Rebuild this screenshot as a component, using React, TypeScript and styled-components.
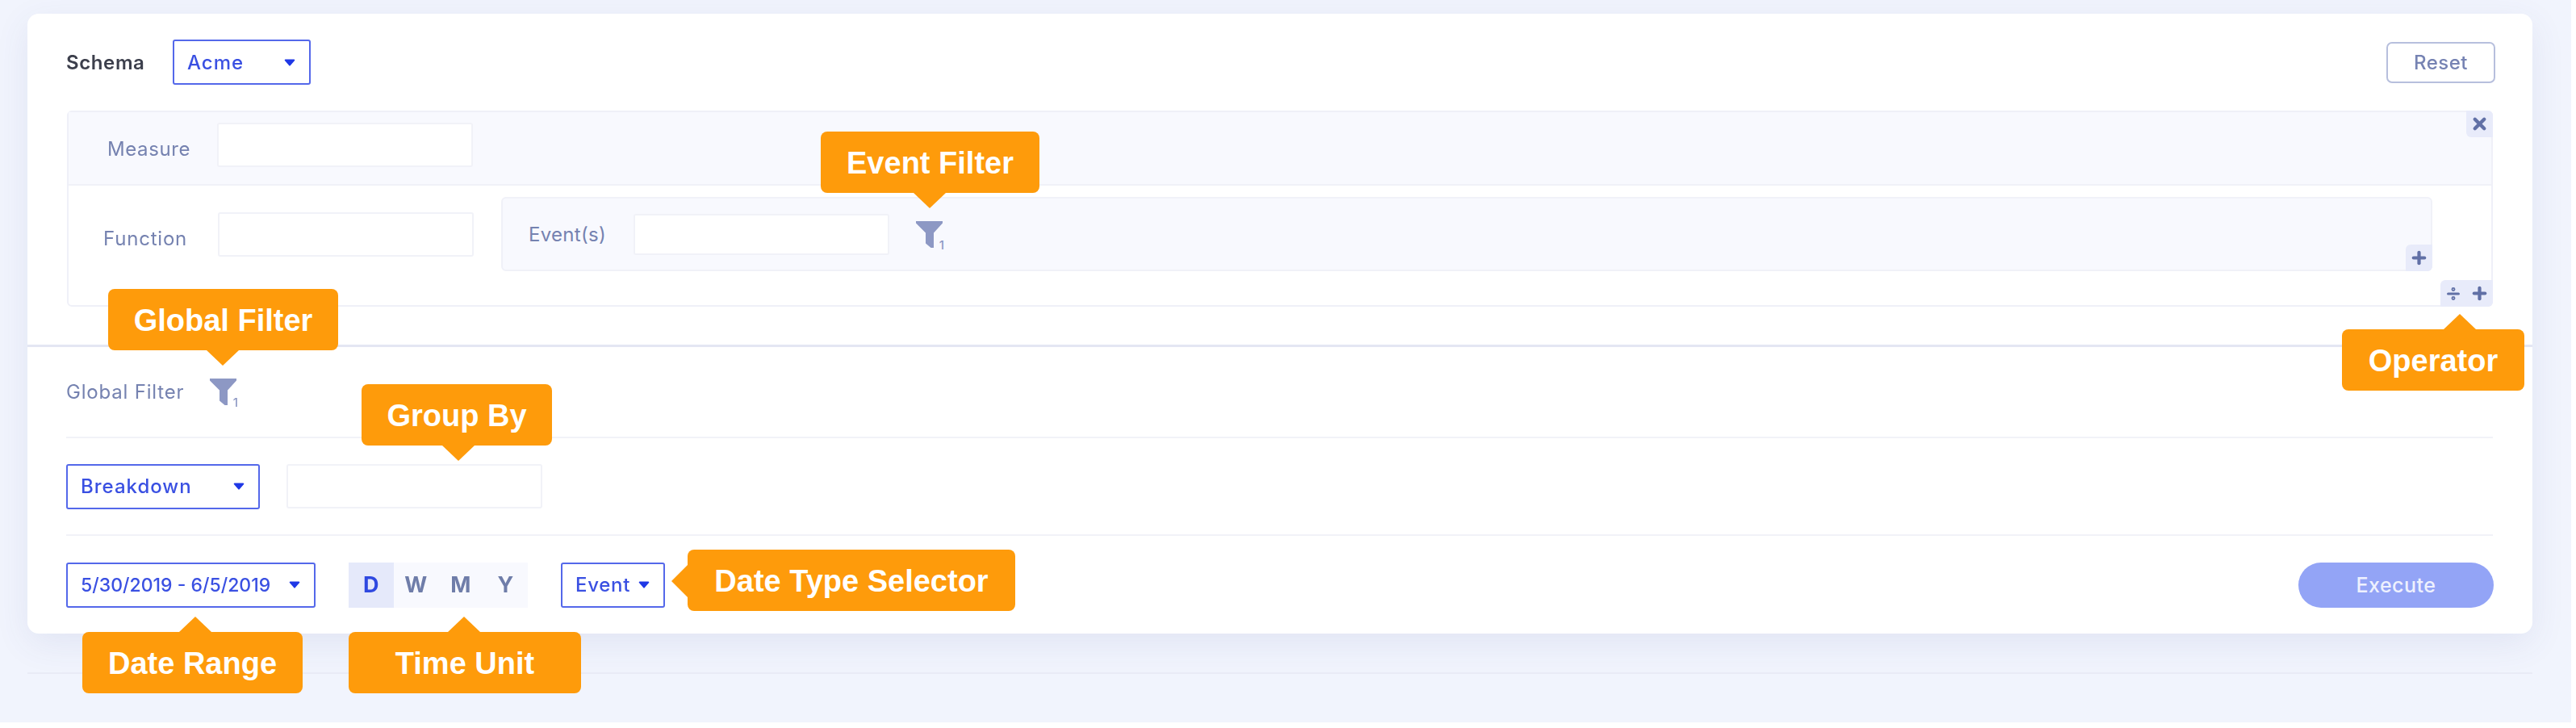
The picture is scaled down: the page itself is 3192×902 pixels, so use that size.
import React from 'react';
import styled, { createGlobalStyle, css } from 'styled-components';
import { Divide, Plus, X } from 'lucide-react';

const GlobalStyle = createGlobalStyle`
  body {
    margin: 0;
    background: #fff;
    font-family: Inter, "Open Sans", sans-serif;
  }
`;

type TipSide = 'up' | 'down' | 'left';

interface CalloutProps {
  $left: number;
  $top: number;
  $width: number;
  $tip: TipSide;
  $tipAt: number;
}

const Callout = styled.div<CalloutProps>`
  position: absolute;
  z-index: 2;
  box-sizing: border-box;
  left: ${p => p.$left}px;
  top: ${p => p.$top}px;
  width: ${p => p.$width}px;
  height: 76px;
  padding-top: 3px;
  display: flex;
  align-items: center;
  justify-content: center;
  border-radius: 8px;
  background: #fe9b0b;
  color: #fff;
  font-family: "Liberation Sans", Arial, sans-serif;
  font-size: 38px;
  font-weight: 700;
  white-space: nowrap;

  &::after {
    content: '';
    position: absolute;
    width: 0;
    height: 0;
    ${p =>
      p.$tip === 'down' &&
      css`
        top: 100%;
        left: ${p.$tipAt - 20}px;
        border-left: 20px solid transparent;
        border-right: 20px solid transparent;
        border-top: 19px solid #fe9b0b;
      `}
    ${p =>
      p.$tip === 'up' &&
      css`
        bottom: 100%;
        left: ${p.$tipAt - 20}px;
        border-left: 20px solid transparent;
        border-right: 20px solid transparent;
        border-bottom: 19px solid #fe9b0b;
      `}
    ${p =>
      p.$tip === 'left' &&
      css`
        right: 100%;
        top: ${p.$tipAt - 20}px;
        border-top: 20px solid transparent;
        border-bottom: 20px solid transparent;
        border-right: 20px solid #fe9b0b;
      `}
  }
`;

const Page = styled.div`
  box-sizing: border-box;
  width: 3186px;
  height: 895px;
  padding: 17px 48px 0 34px;
  background: #f1f4fd;
  filter: blur(0.6px);
`;

const Card = styled.div`
  position: relative;
  height: 768px;
  display: flex;
  flex-direction: column;
  border-radius: 14px;
  background: #fff;
  box-shadow: 0 12px 44px rgba(70, 80, 140, 0.09);
`;

const PageRule = styled.div`
  height: 2px;
  margin-top: 48px;
  background: #e9ebf6;
`;

const Head = styled.div`
  display: flex;
  align-items: center;
  justify-content: space-between;
  padding: 32px 46px 32px 48px;
`;

const SchemaGroup = styled.div`
  display: flex;
  align-items: center;
`;

const SchemaLabel = styled.span`
  width: 132px;
  font-size: 24px;
  font-weight: 600;
  letter-spacing: 0.6px;
  color: #3c3f4c;
`;

const Select = styled.div<{ $width: number; $spacing?: number }>`
  box-sizing: border-box;
  width: ${p => p.$width}px;
  height: 56px;
  display: flex;
  align-items: center;
  justify-content: space-between;
  padding: 0 17px 0 16px;
  border: 2px solid #5468ea;
  border-radius: 3px;
  color: #3a50e2;
  font-size: ${p => (p.$spacing ? 24 : 23)}px;
  font-weight: 500;
  letter-spacing: ${p => p.$spacing ?? 0}px;
  white-space: nowrap;
`;

const ResetButton = styled.button`
  width: 135px;
  height: 51px;
  padding: 0;
  border: 2px solid #b7bfdd;
  border-radius: 7px;
  background: #fff;
  color: #7683b3;
  font-family: inherit;
  font-size: 24px;
  font-weight: 500;
  letter-spacing: 0.5px;
`;

const MetricBox = styled.div`
  position: relative;
  box-sizing: border-box;
  height: 243px;
  margin: 0 49px 47px;
  border: 2px solid #eff0f8;
  border-radius: 6px;
`;

const MeasureRow = styled.div`
  box-sizing: border-box;
  height: 91px;
  display: flex;
  align-items: center;
  padding: 0 0 8px 48px;
  background: #f8f9fe;
  border-bottom: 2px solid #f0f1f8;
`;

const FieldLabel = styled.span<{ $width: number; $shift?: number; $spacing?: number }>`
  width: ${p => p.$width}px;
  flex: none;
  padding-top: ${p => p.$shift ?? 0}px;
  font-size: 24px;
  letter-spacing: ${p => p.$spacing ?? 0.6}px;
  color: #7582b0;
`;

const TextInput = styled.div<{ $height?: number; $gap?: number }>`
  box-sizing: border-box;
  width: 317px;
  height: ${p => p.$height ?? 55}px;
  margin-left: ${p => p.$gap ?? 0}px;
  flex: none;
  border: 2px solid #f1f2f8;
  border-radius: 3px;
  background: #fff;
`;

const FunctionRow = styled.div`
  display: flex;
  align-items: center;
  height: 92px;
  margin-top: 14px;
  padding-left: 43px;
`;

const EventPanel = styled.div`
  position: relative;
  box-sizing: border-box;
  width: 2393px;
  height: 92px;
  margin-left: 34px;
  display: flex;
  align-items: center;
  padding-left: 32px;
  background: #f8f9fe;
  border: 2px solid #f0f1f8;
  border-radius: 6px;
`;

const FilterIcon = styled.span<{ $gap: number }>`
  position: relative;
  display: block;
  width: 33px;
  height: 33px;
  margin-left: ${p => p.$gap}px;
  color: #8d98c4;

  svg {
    display: block;
  }
`;

const FilterCount = styled.span`
  position: absolute;
  right: -2px;
  bottom: -4px;
  font-size: 15px;
  font-weight: 500;
  line-height: 15px;
  color: #8d98c4;
`;

const Badge = styled.div<{ $width: number; $corner: 'tl' | 'bl' }>`
  position: absolute;
  right: -2px;
  ${p => (p.$corner === 'bl' ? 'top: -2px;' : 'bottom: -2px;')}
  width: ${p => p.$width}px;
  height: 33px;
  display: flex;
  align-items: center;
  justify-content: space-around;
  background: #e8ebfa;
  color: #6170a6;
  border-radius: ${p => (p.$corner === 'bl' ? '0 6px 0 6px' : '6px 0 6px 0')};
`;

const Section = styled.div`
  border-top: 3px solid #e4e6f3;
`;

const Row = styled.div<{ $height: number; $last?: boolean }>`
  box-sizing: border-box;
  height: ${p => p.$height}px;
  margin: 0 49px 0 48px;
  display: flex;
  align-items: center;
  border-bottom: ${p => (p.$last ? 'none' : '2px solid #f1f2f8')};
`;

const UnitTabs = styled.div`
  display: flex;
  margin: 0 41px;
  background: #f8f9fe;
`;

const UnitTab = styled.div<{ $active?: boolean }>`
  width: 55.5px;
  height: 56px;
  display: flex;
  align-items: center;
  justify-content: center;
  font-size: 27px;
  font-weight: 700;
  color: ${p => (p.$active ? '#2f49e0' : '#6f7da9')};
  background: ${p => (p.$active ? '#e5e9fa' : 'transparent')};
`;

const ExecuteButton = styled.button`
  width: 242px;
  height: 56px;
  margin: 0 -1px 0 auto;
  padding: 0;
  border: none;
  border-radius: 28px;
  background: #93a4f6;
  color: #eef1fe;
  font-family: inherit;
  font-size: 25px;
  font-weight: 500;
  letter-spacing: 0.5px;
`;

const Caret = () => (
  <svg width="14" height="9" viewBox="0 0 15 10">
    <path d="M1.5 0.5h12a1 1 0 0 1 .8 1.6l-6 7a1 1 0 0 1-1.6 0l-6-7a1 1 0 0 1 .8-1.6z" fill="#1f38e6" />
  </svg>
);

const Funnel = ({ gap }: { gap: number }) => (
  <FilterIcon $gap={gap}>
    <svg width="33" height="33" viewBox="0 0 33 33">
      <path d="M0 0h33v2.5L22 14.5V33h-3.5L12 27.5v-13L0 2.5z" fill="currentColor" />
    </svg>
    <FilterCount>1</FilterCount>
  </FilterIcon>
);

const App = () => (
  <>
    <GlobalStyle />
    <Page>
      <Card>
        <Head>
          <SchemaGroup>
            <SchemaLabel>Schema</SchemaLabel>
            <Select $width={171} $spacing={1}>
              Acme
              <Caret />
            </Select>
          </SchemaGroup>
          <ResetButton>Reset</ResetButton>
        </Head>

        <MetricBox>
          <MeasureRow>
            <FieldLabel $width={136} $shift={10}>Measure</FieldLabel>
            <TextInput />
          </MeasureRow>
          <FunctionRow>
            <FieldLabel $width={142} $shift={10} $spacing={0.8}>Function</FieldLabel>
            <TextInput />
            <EventPanel>
              <FieldLabel $width={130} $spacing={0.3}>Event(s)</FieldLabel>
              <TextInput $height={51} />
              <Funnel gap={33} />
              <Badge $width={33} $corner="tl">
                <Plus size={23} strokeWidth={4.4} />
              </Badge>
            </EventPanel>
          </FunctionRow>
          <Badge $width={33} $corner="bl">
            <X size={23} strokeWidth={4.6} />
          </Badge>
          <Badge $width={65} $corner="tl">
            <Divide size={22} strokeWidth={3.4} />
            <Plus size={23} strokeWidth={4.4} />
          </Badge>
        </MetricBox>

        <Section>
          <Row $height={113}>
            <FieldLabel $width={178} $spacing={0.8}>Global Filter</FieldLabel>
            <Funnel gap={0} />
          </Row>
          <Row $height={121}>
            <Select $width={240} $spacing={1}>
              Breakdown
              <Caret />
            </Select>
            <TextInput $gap={33} />
          </Row>
          <Row $height={121} $last>
            <Select $width={309}>
              5/30/2019 - 6/5/2019
              <Caret />
            </Select>
            <UnitTabs>
              <UnitTab $active>D</UnitTab>
              <UnitTab>W</UnitTab>
              <UnitTab>M</UnitTab>
              <UnitTab>Y</UnitTab>
            </UnitTabs>
            <Select $width={129} $spacing={0.7}>
              Event
              <Caret />
            </Select>
            <ExecuteButton>Execute</ExecuteButton>
          </Row>
        </Section>

        <Callout $left={983} $top={146} $width={271} $tip="down" $tipAt={135}>
          Event Filter
        </Callout>
        <Callout $left={100} $top={341} $width={285} $tip="down" $tipAt={142}>
          Global Filter
        </Callout>
        <Callout $left={414} $top={459} $width={236} $tip="down" $tipAt={120}>
          Group By
        </Callout>
        <Callout $left={2868} $top={391} $width={226} $tip="up" $tipAt={146}>
          Operator
        </Callout>
        <Callout $left={818} $top={664} $width={406} $tip="left" $tipAt={39}>
          Date Type Selector
        </Callout>
        <Callout $left={68} $top={766} $width={273} $tip="up" $tipAt={140}>
          Date Range
        </Callout>
        <Callout $left={398} $top={766} $width={288} $tip="up" $tipAt={143}>
          Time Unit
        </Callout>
      </Card>
      <PageRule />
    </Page>
  </>
);

export default App;
